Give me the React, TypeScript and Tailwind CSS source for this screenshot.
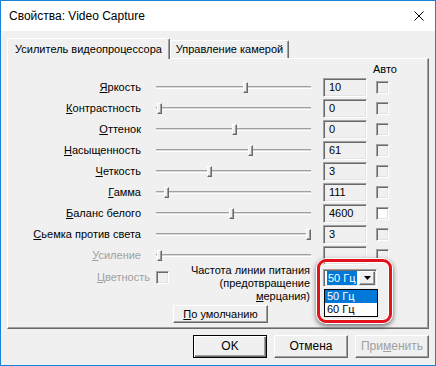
import React from "react";

const raised =
  "border border-t-white border-l-white border-r-[#696969] border-b-[#696969] shadow-[inset_-1px_-1px_0_#a0a0a0]";
const sunken =
  "border border-t-[#a0a0a0] border-l-[#a0a0a0] border-r-white border-b-white shadow-[inset_1px_1px_0_#696969,inset_-1px_-1px_0_#e3e3e3]";

type Row = {
  first: string;
  rest: string;
  value: string;
  thumb: string;
  white?: boolean;
  disabled?: boolean;
};

const rows: Row[] = [
  { first: "Я", rest: "ркость", value: "10", thumb: "left-[87px]" },
  { first: "К", rest: "онтрастность", value: "0", thumb: "left-[1px]" },
  { first: "О", rest: "ттенок", value: "0", thumb: "left-[76px]" },
  { first: "Н", rest: "асыщенность", value: "61", thumb: "left-[92px]" },
  { first: "Ч", rest: "еткость", value: "3", thumb: "left-[51px]" },
  { first: "Г", rest: "амма", value: "111", thumb: "left-[8px]" },
  { first: "Б", rest: "аланс белого", value: "4600", thumb: "left-[73px]", white: true },
  { first: "С", rest: "ьемка против света", value: "3", thumb: "left-[150px]" },
  { first: "У", rest: "силение", value: "", thumb: "left-[1px]", disabled: true },
];

function Slider({ thumb }: { thumb: string }) {
  return (
    <div className="relative ml-[15px] h-[21px] w-[155px]">
      <div className="absolute left-0 right-0 top-[9px] h-[3px] border-t border-b border-t-[#a0a0a0] border-b-white bg-[#dadada]" />
      <div className={`absolute top-[5px] h-[11px] w-[5px] bg-[#f0f0f0] ${raised} ${thumb}`} />
    </div>
  );
}

function Arrow() {
  return (
    <svg width="7" height="4" viewBox="0 0 7 4">
      <path d="M0 0H7L3.5 4Z" fill="#000" />
    </svg>
  );
}

export default function App() {
  return (
    <div className="relative flex h-[366px] w-[436px] flex-col overflow-hidden border border-[#1883d7] bg-[#f0f0f0] font-['Liberation_Sans',Arial,sans-serif] text-[11px] leading-[13px] text-black">
      {/* Title bar */}
      <div className="flex h-[30px] items-center justify-between bg-white pl-[8px] pr-[11px]">
        <span className="text-[12px]">Свойства: Video Capture</span>
        <svg width="10" height="10" viewBox="0 0 10 10">
          <path d="M0.5 0.5L9.5 9.5M9.5 0.5L0.5 9.5" stroke="#000" strokeWidth="1" />
        </svg>
      </div>

      {/* Body */}
      <div className="flex flex-1 flex-col px-[6px] pt-[7px]">
        {/* Tabs */}
        <div className="flex h-[20px] items-end">
          <div className="relative z-10 -mb-[1px] flex h-[21px] w-[163px] items-center justify-center rounded-t-[2px] border-l border-t border-r border-l-white border-t-white border-r-[#696969] bg-[#f0f0f0] shadow-[inset_-1px_0_0_#a0a0a0]">
            Усилитель видеопроцессора
          </div>
          <div className="flex h-[18px] w-[119px] items-center justify-center rounded-t-[2px] border-l border-t border-r border-l-white border-t-white border-r-[#696969] shadow-[inset_-1px_0_0_#a0a0a0]">
            Управление камерой
          </div>
        </div>

        {/* Panel */}
        <div className="flex h-[271px] flex-col border border-l-white border-t-white border-r-[#696969] border-b-[#696969] shadow-[inset_-1px_-1px_0_#a0a0a0]">
          <div className="h-[18px] pl-[365px] pt-[4px]">Авто</div>

          {rows.map((r) => (
            <div key={r.first + r.rest} className="flex h-[21px] items-center">
              <div className={`w-[133px] text-right ${r.disabled ? "text-[#a0a0a0]" : ""}`}>
                <u className="underline-offset-[1px]">{r.first}</u>
                {r.rest}
              </div>
              <Slider thumb={r.thumb} />
              <div className={`ml-[12px] flex h-[19px] w-[44px] items-center bg-[#f0f0f0] pl-[5px] ${sunken}`}>
                {r.value}
              </div>
              <div className={`ml-[9px] h-[13px] w-[13px] ${sunken} ${r.white ? "bg-white" : "bg-[#f0f0f0]"}`} />
            </div>
          ))}

          {/* Bottom controls */}
          <div className="flex h-[39px] items-start">
            <div className="mt-[5px] flex w-[161px] items-center justify-end text-[#a0a0a0]">
              <span>
                <u className="underline-offset-[1px]">Ц</u>ветность
              </span>
              <div className={`ml-[6px] h-[13px] w-[13px] bg-[#f0f0f0] ${sunken}`} />
            </div>
            <div className="-mt-[2px] w-[141px] text-right leading-[13px]">
              Частота линии питания
              <br />
              (предотвращение
              <br />
              <u className="underline-offset-[1px]">м</u>ерцания)
            </div>
            <div className={`relative ml-[13px] mt-[3px] flex h-[18px] w-[54px] items-center bg-white ${sunken}`}>
              <span className="ml-[3px] flex h-[14px] items-center bg-[#0078d7] px-[1px] text-white">50 Гц</span>
              <div className={`ml-auto mr-[1px] flex h-[14px] w-[16px] items-center justify-center bg-[#f0f0f0] ${raised}`}>
                <Arrow />
              </div>
              <div className="absolute left-0 top-[19px] z-20 flex w-[54px] flex-col border border-black bg-white">
                <div className="flex h-[13px] items-center bg-[#0078d7] pl-[2px] text-white">50 Гц</div>
                <div className="flex h-[13px] items-center pl-[2px]">60 Гц</div>
              </div>
            </div>
          </div>

          <div className="pl-[165px]">
            <div className={`flex h-[18px] w-[95px] items-center justify-center bg-[#f0f0f0] ${raised}`}>
              <span>
                <u className="underline-offset-[1px]">П</u>о умолчанию
              </span>
            </div>
          </div>
        </div>

        {/* Dialog buttons */}
        <div className="mt-[6px] flex justify-end gap-[7px]">
          <div className="flex h-[23px] w-[74px] items-center justify-center border border-black bg-[#f0f0f0] text-[12px] shadow-[inset_1px_1px_0_white,inset_-1px_-1px_0_#696969,inset_-2px_-2px_0_#a0a0a0]">
            OK
          </div>
          <div className={`flex h-[23px] w-[74px] items-center justify-center bg-[#f0f0f0] text-[12px] ${raised}`}>
            Отмена
          </div>
          <div className={`flex h-[23px] w-[74px] items-center justify-center bg-[#f0f0f0] text-[12px] text-[#a0a0a0] ${raised}`}>
            <span>
              При<u className="underline-offset-[1px]">м</u>енить
            </span>
          </div>
        </div>
      </div>

      {/* Red highlight annotation */}
      <div className="pointer-events-none absolute left-[316px] top-[258px] z-30 h-[64px] w-[75px] rounded-[9px] border-[3px] border-[#e3131b] shadow-[0_0_0_1px_white,0_2px_5px_1px_rgba(0,0,0,0.55),inset_0_0_0_1px_white]" />
    </div>
  );
}
